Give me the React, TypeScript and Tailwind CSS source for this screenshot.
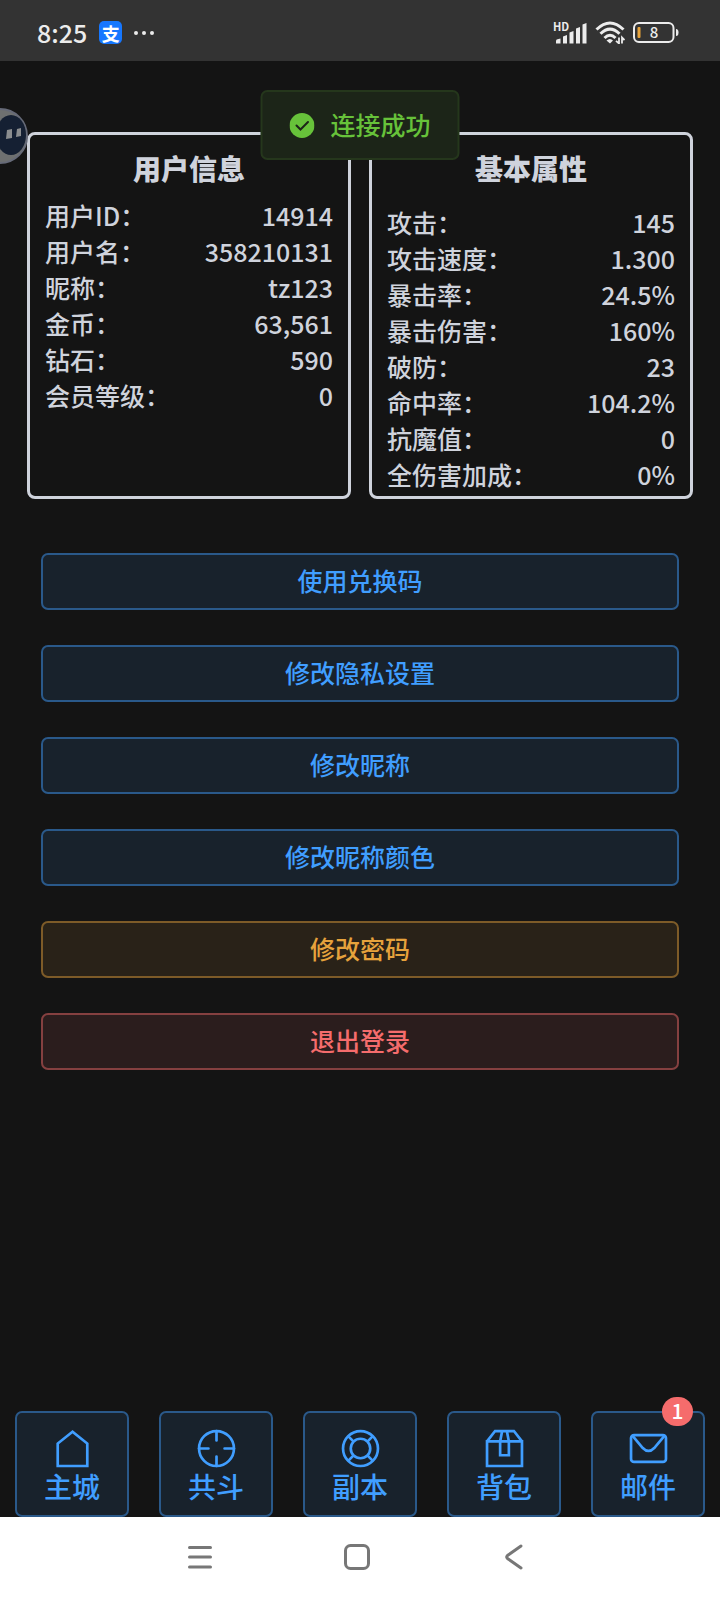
import { useState } from 'react';
import type { ReactNode } from 'react';

const USER_INFO = [
  ['用户ID：', '14914'],
  ['用户名：', '358210131'],
  ['昵称：', 'tz123'],
  ['金币：', '63,561'],
  ['钻石：', '590'],
  ['会员等级：', '0'],
];

const BASE_STATS = [
  ['攻击：', '145'],
  ['攻击速度：', '1.300'],
  ['暴击率：', '24.5%'],
  ['暴击伤害：', '160%'],
  ['破防：', '23'],
  ['命中率：', '104.2%'],
  ['抗魔值：', '0'],
  ['全伤害加成：', '0%'],
];

const TONES = {
  primary: 'border-[#2a598a] bg-[#18222c] text-[#409eff]',
  warning: 'border-[#7d5b28] bg-[#292218] text-[#e6a23c]',
  danger: 'border-[#854040] bg-[#2b1d1d] text-[#f56c6c]',
};

const ACTIONS: { label: string; tone: keyof typeof TONES }[] = [
  { label: '使用兑换码', tone: 'primary' },
  { label: '修改隐私设置', tone: 'primary' },
  { label: '修改昵称', tone: 'primary' },
  { label: '修改昵称颜色', tone: 'primary' },
  { label: '修改密码', tone: 'warning' },
  { label: '退出登录', tone: 'danger' },
];

// nav icons share a 1024 grid and a 64 unit stroke
const NAV: { label: string; badge?: number; icon: ReactNode }[] = [
  { label: '主城', icon: <path d="M512 112 160 394V928H864V394Z" /> },
  {
    label: '共斗',
    icon: (
      <>
        <circle cx="512" cy="512" r="416" />
        <path strokeLinecap="round" d="M512 96V320M512 704V928M96 512H320M704 512H928" />
      </>
    ),
  },
  {
    label: '副本',
    icon: (
      <>
        <circle cx="512" cy="512" r="416" />
        <circle cx="512" cy="512" r="232" />
        <path d="M218 218 348 348M806 218 676 348M218 806 348 676M806 806 676 676" />
      </>
    ),
  },
  {
    label: '背包',
    icon: (
      <path d="M96 344V928H928V344ZM96 344 288 96H736L928 344M456 96 408 344V672H616V344L568 96" />
    ),
  },
  {
    label: '邮件',
    badge: 1,
    icon: (
      <>
        <rect x="96" y="192" width="832" height="640" rx="72" />
        <path d="M128 208 376 500Q512 640 648 500L896 208" />
      </>
    ),
  },
];

function StatusBar() {
  return (
    <header className="flex h-[61px] items-center justify-between bg-[#333] pt-1 pr-[41px] pl-[37px] text-[#ececec]">
      <div className="flex items-center">
        <span className="font-['Noto_Sans_CJK_SC',sans-serif] text-[25px] leading-none font-medium">8:25</span>
        <span className="ml-3 flex size-[23px] items-center justify-center rounded-[5px] bg-[#1677ff] text-[18px] leading-none font-bold text-white">
          支
        </span>
        <svg className="ml-3 h-1 w-5" viewBox="0 0 20 4" fill="currentColor">
          <circle cx="2" cy="2" r="2" />
          <circle cx="10" cy="2" r="2" />
          <circle cx="18" cy="2" r="2" />
        </svg>
      </div>
      <div className="flex items-center gap-2">
        <div className="relative">
          <span className="absolute -top-px -left-px text-[11px] leading-[10px] font-bold">HD</span>
          <svg className="h-[22px] w-[33px]" viewBox="0 0 33 22" fill="currentColor">
            <path d="M2 21.500V19Q2 17.500 3.500 17.200L6.500 16.500V21.500ZM9 14.500 13 13V21.500H9ZM15.500 10.500 19.500 9V21.500H15.500ZM22 6.500 26 5V21.500H22ZM28.500 2.500 32.500 1V21.500H28.500Z" />
          </svg>
        </div>
        <svg className="h-[23px] w-[30px]" viewBox="0 0 30 23" fill="none" stroke="currentColor">
          <g strokeWidth="3">
            <path d="M1.500 8.500Q15-4.500 28.500 8.500" />
            <path d="M5.500 12.800Q15 3.500 24.500 12.800" />
            <path d="M9.500 17Q15 11.500 20.500 17" />
          </g>
          <path fill="currentColor" stroke="none" d="M11.500 19.500Q15 16.500 18 19.500L15 22.500Z" />
          <path strokeWidth="1.800" d="M24 16.500V22.500L21 19.800M27 22.500V16.500L29.500 19" />
        </svg>
        <svg className="h-[21px] w-[46px]" viewBox="0 0 46 21" fill="none">
          <rect x="1" y="1" width="39.500" height="19" rx="5" stroke="currentColor" strokeWidth="2" />
          <rect x="4.500" y="5" width="3" height="11" rx="1" fill="#e8a33a" />
          <path d="M43 7Q45.500 7 45.500 10.500T43 14Z" fill="currentColor" />
          <text x="21" y="16" textAnchor="middle" fontSize="15" fontWeight="500" fill="currentColor">
            8
          </text>
        </svg>
      </div>
    </header>
  );
}

function StatPanel({ title, rows, roomy }: { title: string; rows: string[][]; roomy?: boolean }) {
  return (
    <section className="rounded-lg border-[3px] border-[#cfd3dc] px-[15px] pt-[13px] pb-1">
      <h2 className={`text-center text-[28px] leading-[40px] font-black ${roomy ? 'mb-4' : 'mb-[9px]'}`}>
        {title}
      </h2>
      <dl className="text-[25px] leading-[36px] font-medium">
        {rows.map(([name, value]) => (
          <div key={name} className="flex justify-between">
            <dt>{name}</dt>
            <dd>{value}</dd>
          </div>
        ))}
      </dl>
    </section>
  );
}

function Toast({ text }: { text: string }) {
  return (
    <div
      role="status"
      className="absolute top-[90px] left-1/2 z-10 flex h-[70px] -translate-x-1/2 items-center gap-4 rounded-[7px] border-2 border-[#25371c] bg-[#1c2518] px-[27px] text-[25px] font-medium whitespace-nowrap text-[#67c23a]"
    >
      <svg className="size-[25px]" viewBox="0 0 25 25" fill="none">
        <circle cx="12.500" cy="12.500" r="12.500" fill="currentColor" />
        <path d="M7 12.500 11 16.500 18.500 9" stroke="#1c2518" strokeWidth="2" strokeLinecap="round" />
      </svg>
      {text}
    </div>
  );
}

function SystemBar() {
  return (
    <div className="flex h-[84px] items-center justify-center gap-[131px] bg-white pr-[6px] pb-1 text-[#777]">
      <button aria-label="菜单">
        <svg className="size-[26px]" viewBox="0 0 26 26" stroke="currentColor" strokeWidth="3" strokeLinecap="round">
          <path d="M2.500 3.500H23.500M2.500 13H23.500M2.500 23H23.500" />
        </svg>
      </button>
      <button aria-label="主屏幕">
        <svg className="size-[26px]" viewBox="0 0 26 26" fill="none" stroke="currentColor" strokeWidth="3">
          <rect x="1.500" y="1.500" width="23" height="23" rx="5" />
        </svg>
      </button>
      <button aria-label="返回">
        <svg className="size-[26px]" viewBox="0 0 26 26" fill="none" stroke="currentColor" strokeWidth="3" strokeLinecap="round">
          <path d="M20 2 6.500 11.500Q5 13 6.500 14.500L20 24" />
        </svg>
      </button>
    </div>
  );
}

export default function App() {
  const [tab, setTab] = useState('');

  return (
    <div className="relative flex min-h-screen flex-col overflow-hidden bg-[#141414] font-['Noto_Sans_CJK_SC',sans-serif] text-[#cfd3dc]">
      <StatusBar />
      <Toast text="连接成功" />

      {/* floating assistant, half off the left edge */}
      <svg className="absolute top-[108px] left-[-28px] size-14" viewBox="0 0 56 56">
        <circle cx="28" cy="28" r="27" fill="#6e7070" stroke="#666a78" strokeWidth="2" />
        <ellipse cx="39" cy="27" rx="15" ry="20" fill="#152033" />
        <path fill="#8b8d8f" d="M35 22 40 21V30L34 31ZM45 21 49 20V28L44 29Z" />
      </svg>

      <main className="flex-1 pt-[71px]">
        <div className="grid grid-cols-2 gap-[18px] px-[27px]">
          <StatPanel title="用户信息" rows={USER_INFO} />
          <StatPanel title="基本属性" rows={BASE_STATS} roomy />
        </div>
        <div className="mt-[54px] flex flex-col gap-[35px] px-[41px]">
          {ACTIONS.map((a) => (
            <button
              key={a.label}
              className={`h-[57px] rounded-[7px] border-2 pb-[2px] text-[25px] leading-none font-medium ${TONES[a.tone]}`}
            >
              {a.label}
            </button>
          ))}
        </div>
      </main>

      <nav className="grid grid-cols-5">
        {NAV.map((n) => (
          <button
            key={n.label}
            onClick={() => setTab(n.label)}
            aria-pressed={tab === n.label}
            className="relative mx-[15px] flex h-[106px] flex-col items-center rounded-[7px] border-2 border-[#2a598a] bg-[#18222c] pt-[14px] text-[28px] leading-[32px] font-medium text-[#409eff]"
          >
            <svg className="size-[43px]" viewBox="0 0 1024 1024" fill="none" stroke="currentColor" strokeWidth="64">
              {n.icon}
            </svg>
            {n.label}
            {n.badge && (
              <span className="absolute -top-4 right-[10px] flex h-[29px] w-[31px] items-center justify-center rounded-full bg-[#f56c6c] pb-[2px] text-[21px] leading-none font-medium text-white">
                {n.badge}
              </span>
            )}
          </button>
        ))}
      </nav>
      <SystemBar />
    </div>
  );
}
